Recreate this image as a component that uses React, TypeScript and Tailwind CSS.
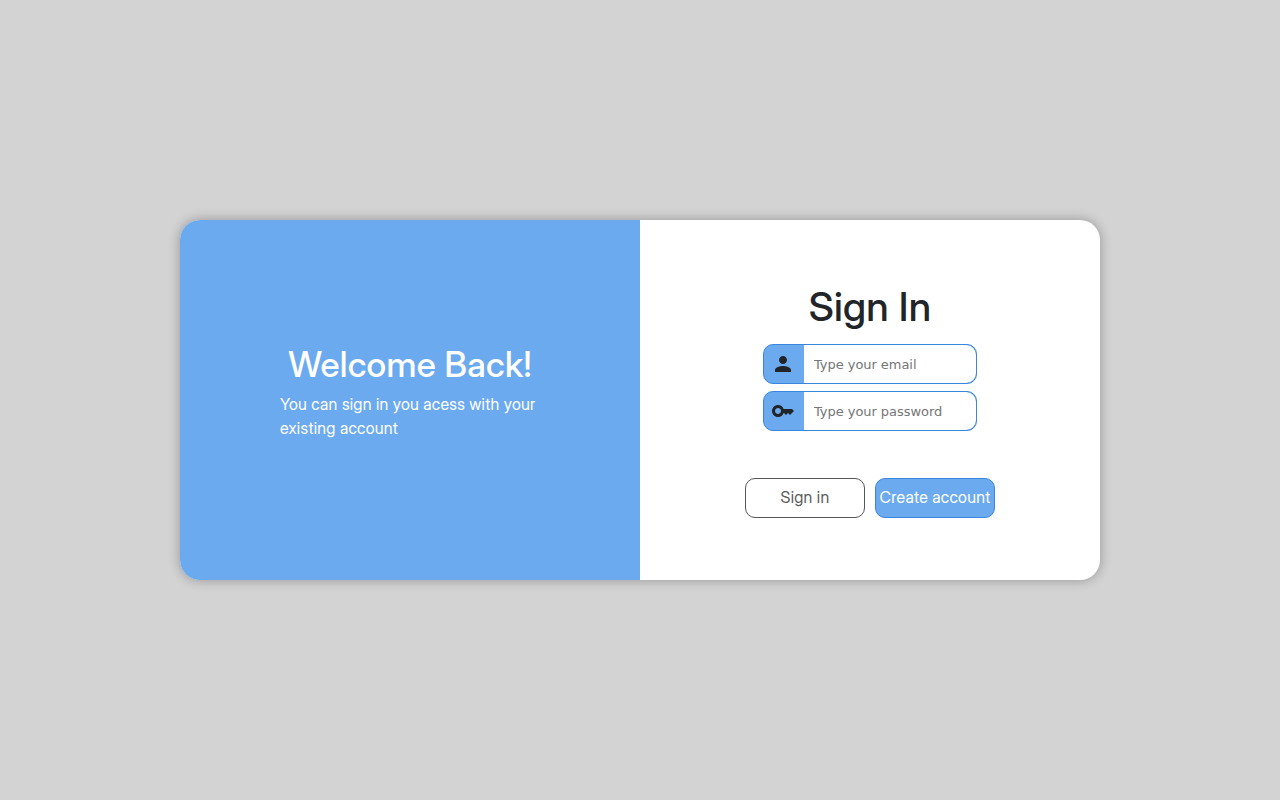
import React from "react";
import { MdPerson, MdKey } from "react-icons/md";

type FieldProps = {
  icon: React.ReactNode;
  type: string;
  placeholder: string;
};

function Field({ icon, type, placeholder }: FieldProps) {
  return (
    <div className="flex h-10 w-[214px] overflow-hidden rounded-[10px] border border-[#3a86dc] bg-[#6caaf0]">
      <div className="flex w-10 shrink-0 items-center pl-[7px]">{icon}</div>
      <input
        type={type}
        placeholder={placeholder}
        className="min-w-0 flex-1 rounded-r-[10px] bg-white pt-px pl-2.5 font-['DejaVu_Sans',sans-serif] text-[13px] tracking-[-0.05px] outline-none placeholder:text-[#757575]"
      />
    </div>
  );
}

export default function App() {
  return (
    <main className="flex h-screen items-center justify-center bg-[#d3d3d3] font-['Inter_Display','Inter',sans-serif] [font-variation-settings:'opsz'_32] text-base leading-6 tracking-[0.27px] text-[#212529]">
      <div className="flex h-[360px] w-[920px] overflow-hidden rounded-[20px] bg-white shadow-[0_0_12px_rgba(0,0,0,0.3)]">
        <section className="flex w-1/2 flex-col items-center justify-center bg-[#6caaf0] pb-4 text-white">
          <h2 className="mb-[7px] text-[35px] leading-[42px] font-medium">Welcome Back!</h2>
          <p className="mb-px w-[260px]">You can sign in you acess with your existing account</p>
        </section>
        <section className="flex w-1/2 flex-col items-center pt-[63px]">
          <h1 className="mb-[13px] text-[40px] leading-[48px] font-medium">Sign In</h1>
          <div className="flex flex-col gap-[7px]">
            <Field icon={<MdPerson size={24} />} type="email" placeholder="Type your email" />
            <Field icon={<MdKey size={24} />} type="password" placeholder="Type your password" />
          </div>
          <div className="mt-[47px] flex gap-2.5">
            <button className="h-10 w-[120px] rounded-[10px] border border-[#555] pb-0.5 tracking-[0.27px] text-[#5c5c5c]">Sign in</button>
            <button className="h-10 w-[120px] rounded-[10px] border border-[#3a86dc] bg-[#6caaf0] pb-0.5 tracking-[0.27px] whitespace-nowrap text-white">
              Create account
            </button>
          </div>
        </section>
      </div>
    </main>
  );
}
